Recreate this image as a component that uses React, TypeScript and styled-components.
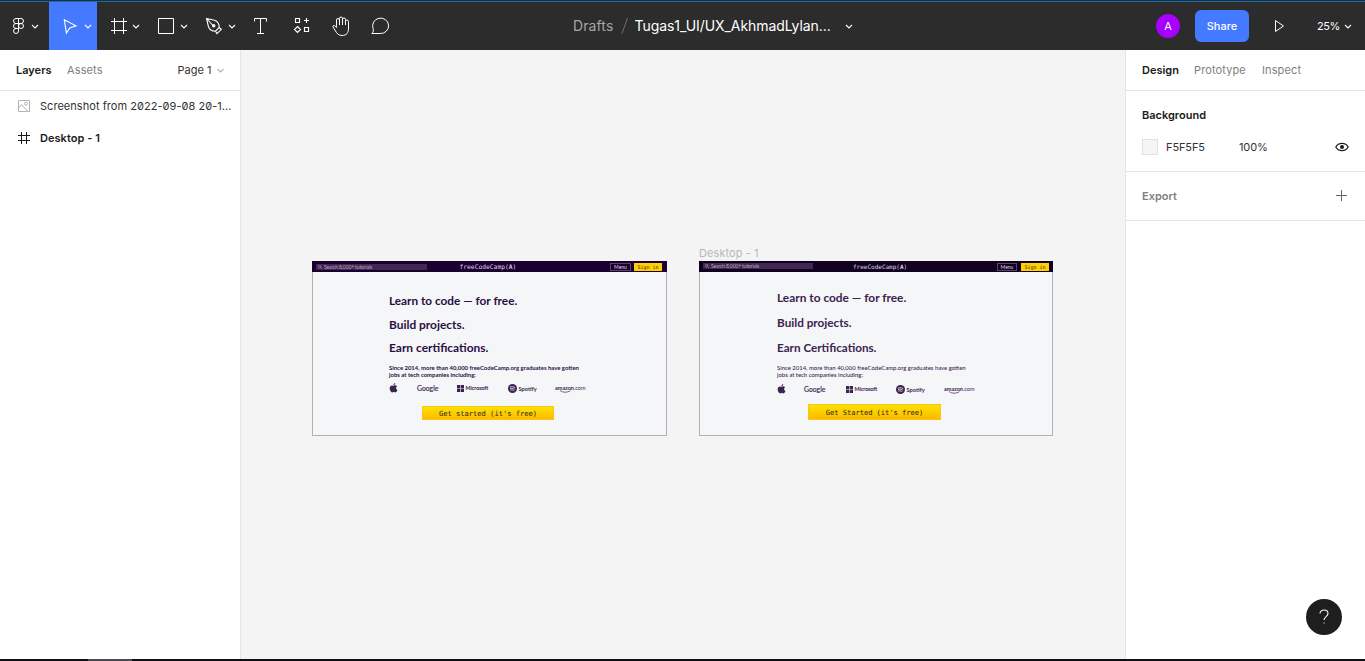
import React from "react";
import styled, { createGlobalStyle, css } from "styled-components";

const GlobalStyle = createGlobalStyle`
  *, *::before, *::after { box-sizing: border-box; }
  html, body { margin: 0; padding: 0; overflow: hidden; }
  body { font-family: Inter, "Liberation Sans", sans-serif; font-size: 11px; color: #333; }
  svg { display: block; flex: none; }
`;

const Screen = styled.div`
  display: flex;
  flex-direction: column;
  width: 1365px;
  height: 661px;
  background: #fff;
`;

const TopEdge = styled.div`
  flex: none;
  height: 2px;
  background: linear-gradient(#06335c 50%, #30648a 50%);
`;

const BottomEdge = styled.div`
  flex: none;
  height: 2px;
  background: #0f0e17;
  padding-left: 88px;
`;

const DockMark = styled.div`
  width: 44px;
  height: 2px;
  background: #4a4a50;
`;

/* ---------- toolbar ---------- */

const Toolbar = styled.header`
  flex: none;
  height: 48px;
  display: flex;
  align-items: center;
  background: #2c2c2c;
  color: #fff;
`;

const Tools = styled.nav`
  display: flex;
  width: 401px;
`;

const ToolButton = styled.div<{ $w: number; $active?: boolean }>`
  display: flex;
  width: ${(p) => p.$w}px;
  height: 48px;
  background: ${(p) => (p.$active ? "#437aff" : "transparent")};
`;

const Title = styled.div`
  display: flex;
  align-items: center;
  margin-left: 172px;
  width: 282px;
  height: 48px;
  font-size: 14px;
  line-height: 18px;
  white-space: nowrap;
`;

const Folder = styled.span`
  width: 48px;
  letter-spacing: 0.1px;
  color: #a5a5a5;
`;

const FileName = styled.span`
  margin-left: 5.5px;
  width: 208.5px;
  letter-spacing: -0.07px;
`;

const Account = styled.div`
  display: flex;
  align-items: center;
  margin-left: 301px;
`;

const Avatar = styled.div`
  display: grid;
  place-items: center;
  width: 24px;
  height: 24px;
  border-radius: 50%;
  background: #a700ff;
  font-size: 11px;
`;

const ShareButton = styled.div`
  display: grid;
  place-items: center;
  margin-left: 15px;
  width: 54px;
  height: 32px;
  border-radius: 6px;
  background: #437aff;
  font-size: 11px;
  font-weight: 500;
  letter-spacing: 0.05px;
`;

const Zoom = styled.span`
  width: 24px;
  margin-left: 32px;
  font-size: 11px;
  letter-spacing: -0.4px;
`;

/* ---------- side panels ---------- */

const Workspace = styled.main`
  flex: 1;
  min-height: 0;
  display: flex;
`;

const Panel = styled.aside<{ $side: "left" | "right" }>`
  flex: none;
  background: #fff;
  ${(p) =>
    p.$side === "left"
      ? css`width: 241px; border-right: 1px solid #e5e5e5;`
      : css`width: 240px; border-left: 1px solid #e5e5e5;`}
`;

const Tabs = styled.div`
  display: flex;
  align-items: center;
  height: 41px;
  padding: 0 0 0 16px;
  border-bottom: 1px solid #e5e5e5;
`;

const Tab = styled.span<{ $active?: boolean; $w: number }>`
  width: ${(p) => p.$w}px;
  white-space: nowrap;
  letter-spacing: ${(p) => (p.$active ? 0 : 0.12)}px;
  font-weight: ${(p) => (p.$active ? 600 : 400)};
  color: ${(p) => (p.$active ? "#1a1a1a" : "#808080")};
`;

const PageName = styled.span`
  width: 37px;
  white-space: nowrap;
  letter-spacing: 0.02px;
`;

const LayerRow = styled.div<{ $h: number; $bold?: boolean }>`
  display: flex;
  align-items: center;
  gap: 8px;
  height: ${(p) => p.$h}px;
  padding-left: 16px;
  white-space: nowrap;
  font-weight: ${(p) => (p.$bold ? 600 : 400)};
  color: ${(p) => (p.$bold ? "#1a1a1a" : "#333")};
  letter-spacing: 0.04px;
`;

const LayerName = styled.span`
  font-feature-settings: "zero";
`;

const Section = styled.section<{ $h: number }>`
  height: ${(p) => p.$h}px;
  border-bottom: 1px solid #e5e5e5;
  padding: 8px 0 0 16px;
`;

const SectionRow = styled.div`
  display: flex;
  align-items: center;
  height: 32px;
`;

const SectionTitle = styled.span<{ $muted?: boolean }>`
  flex: 1;
  font-weight: 600;
  color: ${(p) => (p.$muted ? "#808080" : "#1a1a1a")};
`;

const Swatch = styled.span`
  width: 16px;
  height: 16px;
  margin-right: 8px;
  border: 1px solid #e2e2e2;
  background: #f5f5f5;
`;

const Value = styled.span<{ $w: number }>`
  width: ${(p) => p.$w}px;
  letter-spacing: -0.1px;
`;

/* ---------- canvas ---------- */

const Canvas = styled.div`
  position: relative;
  flex: 1;
  background: #f4f4f4;
`;

const Node = styled.div<{ $x: number; $y: number; $w: number }>`
  position: absolute;
  left: ${(p) => p.$x}px;
  top: ${(p) => p.$y}px;
  width: ${(p) => p.$w}px;
`;

const FrameLabel = styled.div`
  height: 16px;
  line-height: 16px;
  color: #b8b8b8;
  letter-spacing: 0.08px;
`;

const Board = styled.article`
  height: 175px;
  background: #f5f6f8;
  border: 1px solid #b0b2b5;
  border-top: 0;
`;

const SiteBar = styled.div<{ $bg: string }>`
  display: flex;
  height: 11px;
  margin: 0 -1px;
  background: ${(p) => p.$bg};
  font-family: Lato, sans-serif;
  color: #fff;
  white-space: nowrap;
`;

const SearchBox = styled.div<{ $y: number; $w: number }>`
  display: flex;
  align-items: center;
  gap: 2px;
  width: ${(p) => p.$w}px;
  height: 6px;
  margin: ${(p) => p.$y}px 0 0 4px;
  padding-left: 2px;
  background: #402850;
  color: #b9aec0;
  font-size: 5px;
  letter-spacing: -0.13px;
  line-height: 6px;
`;

const SiteLogo = styled.div<{ $ml: number; $w: number; $size: number }>`
  margin-left: ${(p) => p.$ml}px;
  width: ${(p) => p.$w}px;
  font-family: "DejaVu Sans Mono", monospace;
  font-size: ${(p) => p.$size}px;
  line-height: 11px;
  color: #dcd4e2;
`;

const BarButton = styled.div<{ $ml: number; $w: number; $filled?: boolean }>`
  margin: 2px 0 0 ${(p) => p.$ml}px;
  width: ${(p) => p.$w}px;
  height: 8px;
  text-align: center;
  line-height: ${(p) => (p.$filled ? 8 : 6)}px;
  font-size: 5px;
  ${(p) =>
    p.$filled
      ? css`background: #ffcf00; color: #2a1a30; font-family: "DejaVu Sans Mono", monospace;`
      : css`border: 1px solid #594568; color: #ddd6e2;`}
`;

const Hero = styled.div<{ $top: number; $left: number; $color: string }>`
  padding: ${(p) => p.$top}px 0 0 ${(p) => p.$left}px;
  font-family: Lato, sans-serif;
  color: ${(p) => p.$color};
  white-space: nowrap;
`;

const Heading = styled.div<{ $h: number; $size: number }>`
  height: ${(p) => p.$h}px;
  line-height: ${(p) => p.$h}px;
  font-size: ${(p) => p.$size}px;
  font-weight: 700;
`;

const Blurb = styled.p<{ $mt: number; $size: number; $weight: number }>`
  margin: ${(p) => p.$mt}px 0 0;
  font-size: ${(p) => p.$size}px;
  line-height: 7.2px;
  font-weight: ${(p) => p.$weight};
`;

const Brands = styled.div<{ $mt: number }>`
  display: flex;
  align-items: center;
  height: 12px;
  margin-top: ${(p) => p.$mt}px;
  color: #3b2350;
  font-size: 6px;
`;

const Brand = styled.div<{ $w: number; $size?: number; $bold?: boolean }>`
  display: flex;
  align-items: center;
  gap: 1.5px;
  width: ${(p) => p.$w}px;
  font-size: ${(p) => p.$size ?? 6}px;
  font-weight: ${(p) => (p.$bold ? 700 : 400)};
  -webkit-text-stroke: ${(p) => (p.$bold ? 0 : 0.15)}px currentColor;
`;

const Amazon = styled.div`
  position: relative;
  font-size: 5.5px;
  line-height: 8px;
  svg { position: absolute; left: 5px; top: 6px; }
`;

const CallToAction = styled.div<{ $mt: number; $ml: number; $w: number; $h: number; $size: number }>`
  margin: ${(p) => p.$mt}px 0 0 ${(p) => p.$ml}px;
  width: ${(p) => p.$w}px;
  height: ${(p) => p.$h}px;
  line-height: ${(p) => p.$h - 1}px;
  text-align: center;
  border: 1px solid #fcc419;
  background: linear-gradient(#fbe300, #ffb800);
  font-family: "DejaVu Sans Mono", monospace;
  font-size: ${(p) => p.$size}px;
  color: #2b1a1f;
`;

const HelpButton = styled.div`
  position: absolute;
  right: 23px;
  bottom: 26px;
  display: grid;
  place-items: center;
  width: 36px;
  height: 36px;
  border-radius: 50%;
  background: #1e1e1e;
`;

/* ---------- icons ---------- */

const Icon = ({ w, h = 48, children }: { w: number; h?: number; children: React.ReactNode }) => (
  <svg width={w} height={h} viewBox={`0 0 ${w} ${h}`} fill="none" stroke="#fff" strokeWidth="1">
    {children}
  </svg>
);

const Caret = ({ w = 18, x = 9, y = 24, color = "#fff" }) => (
  <svg width={w} height={48} viewBox={`0 0 ${w} 48`} fill="none" stroke={color} strokeWidth="1.1">
    <path d={`M${x - 3} ${y - 1}l3 3 3-3`} />
  </svg>
);

const Magnifier = () => (
  <svg width="4" height="4" viewBox="0 0 4 4" fill="none" stroke="#b9aec0" strokeWidth=".6">
    <circle cx="1.6" cy="1.6" r="1.2" />
    <path d="M2.5 2.5L3.9 3.9" />
  </svg>
);

const Apple = () => (
  <svg width="9" height="10" viewBox="0 0 18 20" fill="currentColor">
    <path d="M12.5 0c.2 2-1.600 4.200-3.700 4.300C8.600 2.300 10.500.300 12.500 0zM9 5.600c1 0 2-.900 3.600-.9 1.500 0 2.700.7 3.600 1.900-3 1.800-2.500 6 .6 7.200-.8 2.300-2.500 5.200-4.300 5.200-1.300 0-1.700-.8-3.200-.8s-2 .8-3.200.8C4 19 1.300 14.600 1.300 10.700c0-3.800 2.400-5.900 4.700-5.900 1.400 0 2.300.8 3 .8z" />
  </svg>
);

const Windows = () => (
  <svg width="7" height="7" viewBox="0 0 7 7" fill="currentColor" stroke="none">
    <path d="M0 0h3.200v3.200H0zM3.800 0H7v3.200H3.800zM0 3.800h3.200V7H0zM3.800 3.800H7V7H3.800z" />
  </svg>
);

const SpotifyMark = () => (
  <svg width="9" height="9" viewBox="0 0 18 18">
    <circle cx="9" cy="9" r="9" fill="currentColor" />
    <path d="M3.500 6.200c4-1.200 7.600-.8 11 1M4 9.300c3.500-1 6.500-.6 9.500 1M4.500 12.200c3-.7 5.500-.4 8 1" fill="none" stroke="#f5f6f9" strokeWidth="1.500" />
  </svg>
);

interface BoardSpec {
  bar: string;
  search: [number, number];
  logo: [number, number, number];
  menu: [number, number];
  signIn: [number, number];
  top: number;
  left: number;
  color: string;
  lines: [string, number][];
  lineHeight: number;
  blurbTop: number;
  blurbSize: number;
  blurbWeight: number;
  brandsTop: number;
  brandWidths: number[];
  cta: [number, number, number, number, number];
  ctaText: string;
}

const imported: BoardSpec = {
  bar: "#1a0030",
  search: [3, 111],
  logo: [32.5, 62, 6.3],
  menu: [88.5, 21],
  signIn: [3, 28],
  top: 17,
  left: 76,
  color: "#2a0f44",
  lines: [["Learn to code — for free.", 11.8], ["Build projects.", 11.9], ["Earn certifications.", 11.95]],
  lineHeight: 23.5,
  blurbTop: 4.5,
  blurbSize: 5.93,
  blurbWeight: 700,
  brandsTop: 3.7,
  brandWidths: [28, 40, 51, 47, 32],
  cta: [12, 33, 132, 14, 7.1],
  ctaText: "Get started (it's free)",
};

const recreated: BoardSpec = {
  bar: "#110020",
  search: [2, 110],
  logo: [40, 60, 6],
  menu: [84, 20],
  signIn: [4, 28],
  top: 13,
  left: 77,
  color: "#3b2350",
  lines: [["Learn to code — for free.", 11.9], ["Build projects.", 11.75], ["Earn Certifications.", 11.7]],
  lineHeight: 25,
  blurbTop: 4,
  blurbSize: 5.93,
  blurbWeight: 500,
  brandsTop: 5,
  brandWidths: [27, 42, 50, 48, 32],
  cta: [9, 31, 133, 16, 7.05],
  ctaText: "Get Started (it's free)",
};

const LandingBoard = ({ s }: { s: BoardSpec }) => (
  <Board>
    <SiteBar $bg={s.bar}>
      <SearchBox $y={s.search[0]} $w={s.search[1]}>
        <Magnifier />
        Search 8,000+ tutorials
      </SearchBox>
      <SiteLogo $ml={s.logo[0]} $w={s.logo[1]} $size={s.logo[2]}>
        freeCodeCamp(<b>A</b>)
      </SiteLogo>
      <BarButton $ml={s.menu[0]} $w={s.menu[1]}>Menu</BarButton>
      <BarButton $ml={s.signIn[0]} $w={s.signIn[1]} $filled>Sign in</BarButton>
    </SiteBar>
    <Hero $top={s.top} $left={s.left} $color={s.color}>
      {s.lines.map(([line, size]) => (
        <Heading key={line} $h={s.lineHeight} $size={size}>{line}</Heading>
      ))}
      <Blurb $mt={s.blurbTop} $size={s.blurbSize} $weight={s.blurbWeight}>
        Since 2014, more than 40,000 freeCodeCamp.org graduates have gotten
        <br />
        jobs at tech companies including:
      </Blurb>
      <Brands $mt={s.brandsTop}>
        <Brand $w={s.brandWidths[0]}><Apple /></Brand>
        <Brand $w={s.brandWidths[1]} $size={6.8}>Google</Brand>
        <Brand $w={s.brandWidths[2]} $size={5.4}><Windows />Microsoft</Brand>
        <Brand $w={s.brandWidths[3]} $size={5.7} $bold><SpotifyMark />Spotify</Brand>
        <Amazon>
          <b>amazon</b>.com
          <svg width="12" height="3" viewBox="0 0 12 3" fill="none" stroke="currentColor" strokeWidth=".7">
            <path d="M0 .5c3 2.200 7 2.200 10.500.2" />
          </svg>
        </Amazon>
      </Brands>
      <CallToAction $mt={s.cta[0]} $ml={s.cta[1]} $w={s.cta[2]} $h={s.cta[3]} $size={s.cta[4]}>{s.ctaText}</CallToAction>
    </Hero>
  </Board>
);

export default function App() {
  return (
    <Screen>
      <GlobalStyle />
      <TopEdge />
      <Toolbar>
        <Tools>
          <ToolButton $w={49}>
            <Icon w={26}>
              <path d="M18.500 16.500h-2.500a2.500 2.500 0 0 0 0 5h2.500zM18.500 16.500h2.500a2.500 2.500 0 0 1 0 5h-2.500zM18.500 21.500h-2.500a2.500 2.500 0 0 0 0 5h2.500zM18.500 26.500h-2.500a2.500 2.500 0 1 0 2.500 2.500z" />
              <circle cx="21" cy="24" r="2.500" />
            </Icon>
            <Caret />
          </ToolButton>
          <ToolButton $w={48} $active>
            <Icon w={30}><path d="M15.300 17.700l11.700 6.100-6.200 2.200-3.400 5.100z" strokeWidth="1.100" /></Icon>
            <Caret />
          </ToolButton>
          <ToolButton $w={48}>
            <Icon w={30}><path d="M17.500 16v16M26.500 16v16M14 19.500h16M14 28.500h16" /></Icon>
            <Caret />
          </ToolButton>
          <ToolButton $w={48}>
            <Icon w={30}><path d="M13.500 16.500h15v15h-15z" /></Icon>
            <Caret />
          </ToolButton>
          <ToolButton $w={48}>
            <Icon w={30}>
              <path d="M13.500 16.500l8 1.800c3 .9 4.700 3.400 4.700 7.200l-3.700 3.700c-3.800 0-6.200-1.700-7.100-4.700zM13.500 16.500l6.500 7M26.200 25.500l2.100 1.800-4.300 4.300-1.500-2.400" strokeWidth="1.100" />
              <circle cx="20.700" cy="23.800" r="1.300" fill="#fff" />
            </Icon>
            <Caret />
          </ToolButton>
          <ToolButton $w={40}>
            <Icon w={40}><path d="M13.500 19.500v-3h12v3M19.500 16.500v15M16 31.500h7" /></Icon>
          </ToolButton>
          <ToolButton $w={40}>
            <Icon w={40}><path d="M14.500 16.500h4v4h-4zM23.500 25.500h4v4h-4zM25.500 16v5M23 18.500h5M16.500 24.500l3 3-3 3-3-3z" strokeWidth="1.150" /></Icon>
          </ToolButton>
          <ToolButton $w={40}>
            <Icon w={40}>
              <path d="M15.500 24.500v-6.500a1.500 1.500 0 0 1 3 0v-1.500a1.500 1.500 0 0 1 3 0v1a1.500 1.500 0 0 1 3 0v2a1.500 1.500 0 0 1 3 0v6.500c0 5-2 7.500-6.500 7.500-3.500 0-5-2-6.500-4.500l-2.500-4c-.6-1.500 1.200-2.200 2.200-1l1.300 1.500zM18.500 18v5M21.500 17v6M24.500 18.500v4.500" />
            </Icon>
          </ToolButton>
          <ToolButton $w={40}>
            <Icon w={40}><path d="M10.800 31.500c1.700-1.500 1.700-3 1.300-5a8 7.700 0 1 1 7 5z" /></Icon>
          </ToolButton>
        </Tools>
        <Title>
          <Folder>Drafts</Folder>
          <svg width="8" height="18" viewBox="0 0 8 18" stroke="#6e6e6e"><path d="M1 16.500L6.500 1" /></svg>
          <FileName>Tugas1_UI/UX_AkhmadLylan...</FileName>
          <Caret w={12} x={6} />
        </Title>
        <Account>
          <Avatar>A</Avatar>
          <ShareButton>Share</ShareButton>
          <Icon w={36}><path d="M26.500 18.500v11l8-5.500z" /></Icon>
          <Zoom>25%</Zoom>
          <Caret w={14} x={7} />
        </Account>
      </Toolbar>

      <Workspace>
        <Panel $side="left">
          <Tabs>
            <Tab $active $w={51}>Layers</Tab>
            <Tab $w={110.500}>Assets</Tab>
            <PageName>Page 1</PageName>
            <Caret w={12} x={5.500} color="#b3b3b3" />
          </Tabs>
          <LayerRow $h={30}>
            <Icon w={16} h={16}>
              <g stroke="#b3b3b3">
                <path d="M2.500 2.500h11v11h-11zM2.500 10l3-3.500 6.500 7" />
                <circle cx="10" cy="5.700" r="1.500" />
              </g>
            </Icon>
            <LayerName>Screenshot from 2022-09-08 20-1...</LayerName>
          </LayerRow>
          <LayerRow $h={34} $bold>
            <Icon w={16} h={16}><path stroke="#1a1a1a" d="M5.500 2v12M10.500 2v12M2 5.500h12M2 10.500h12" /></Icon>
            <LayerName>Desktop - 1</LayerName>
          </LayerRow>
        </Panel>

        <Canvas>
          <Node $x={71} $y={211} $w={355}><LandingBoard s={imported} /></Node>
          <Node $x={458} $y={195} $w={354}>
            <FrameLabel>Desktop - 1</FrameLabel>
            <LandingBoard s={recreated} />
          </Node>
        </Canvas>

        <Panel $side="right">
          <Tabs>
            <Tab $active $w={52}>Design</Tab>
            <Tab $w={68}>Prototype</Tab>
            <Tab $w={50}>Inspect</Tab>
          </Tabs>
          <Section $h={81}>
            <SectionRow><SectionTitle>Background</SectionTitle></SectionRow>
            <SectionRow>
              <Swatch />
              <Value $w={73}>F5F5F5</Value>
              <Value $w={96}>100%</Value>
              <svg width="14" height="10" viewBox="0 0 14 10" fill="none" stroke="#1a1a1a">
                <path d="M.8 5C3.500.2 10.500.2 13.200 5 10.500 9.800 3.500 9.800.8 5z" strokeWidth="1.200" />
                <circle cx="7" cy="5" r="2" fill="#1a1a1a" stroke="none" />
              </svg>
            </SectionRow>
          </Section>
          <Section $h={49}>
            <SectionRow>
              <SectionTitle $muted>Export</SectionTitle>
              <Icon w={34} h={16}><path stroke="#666" d="M10.500 2v11M5 7.500h11" /></Icon>
            </SectionRow>
          </Section>
        </Panel>
      </Workspace>

      <BottomEdge><DockMark /></BottomEdge>
      <HelpButton>
        <svg width="12" height="18" viewBox="0 0 12 18" fill="none" stroke="#fff" strokeWidth="1.100">
          <path d="M2 5.500C2 .8 10 .8 10 5.500c0 3-4 3.200-4 6.500" />
          <path d="M5.500 15h1" />
        </svg>
      </HelpButton>
    </Screen>
  );
}
